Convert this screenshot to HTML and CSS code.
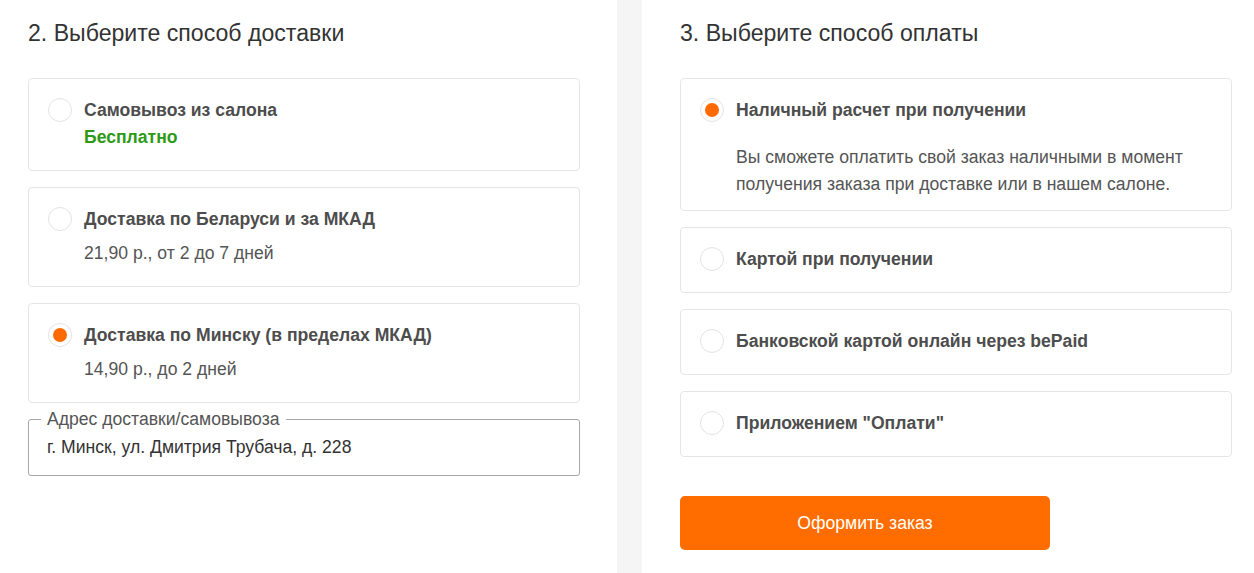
FILE: index.html
```html
<!DOCTYPE html>
<html lang="ru">
<head>
<meta charset="utf-8">
<link rel="stylesheet" href="styles.css">
</head>
<body>
<div class="page">
  <section class="col col-left">
    <h2 class="heading">2. Выберите способ доставки</h2>
    <div class="options">
      <div class="card">
        <span class="radio"></span>
        <div class="body">
          <div class="title">Самовывоз из салона</div>
          <div class="free">Бесплатно</div>
        </div>
      </div>
      <div class="card">
        <span class="radio"></span>
        <div class="body">
          <div class="title">Доставка по Беларуси и за МКАД</div>
          <div class="sub">21,90 р., от 2 до 7 дней</div>
        </div>
      </div>
      <div class="card">
        <span class="radio checked"></span>
        <div class="body">
          <div class="title">Доставка по Минску (в пределах МКАД)</div>
          <div class="sub">14,90 р., до 2 дней</div>
        </div>
      </div>
      <fieldset class="field">
        <legend>Адрес доставки/самовывоза</legend>
        <div class="value">г. Минск, ул. Дмитрия Трубача, д. 228</div>
      </fieldset>
    </div>
  </section>
  <div class="divider"></div>
  <section class="col col-right">
    <h2 class="heading">3. Выберите способ оплаты</h2>
    <div class="options">
      <div class="card card-desc">
        <span class="radio checked"></span>
        <div class="body">
          <div class="title">Наличный расчет при получении</div>
          <div class="desc">Вы сможете оплатить свой заказ наличными в момент получения заказа при доставке или в нашем салоне.</div>
        </div>
      </div>
      <div class="card">
        <span class="radio"></span>
        <div class="body"><div class="title">Картой при получении</div></div>
      </div>
      <div class="card">
        <span class="radio"></span>
        <div class="body"><div class="title">Банковской картой онлайн через bePaid</div></div>
      </div>
      <div class="card">
        <span class="radio"></span>
        <div class="body"><div class="title">Приложением "Оплати"</div></div>
      </div>
    </div>
    <button class="submit" type="button">Оформить заказ</button>
  </section>
</div>
</body>
</html>
```

FILE: styles.css
```css
* { box-sizing: border-box; }
html, body { margin: 0; padding: 0; background: #fff; }
body {
  font-family: "Liberation Sans", Arial, sans-serif;
  color: #555;
  font-size: 17.6px;
}
.page {
  display: flex;
  height: 573px;
  overflow: hidden;
}
.col { padding-top: 20px; }
.col-left { width: 617px; padding-left: 28px; }
.col-right { flex: 1; padding-left: 38px; }
.divider { width: 25px; background: #f5f5f5; }
.heading {
  margin: 0;
  font-size: 23.1px;
  line-height: 26px;
  font-weight: normal;
  color: #333;
}
.options {
  margin-top: 32px;
  width: 552px;
  display: flex;
  flex-direction: column;
  gap: 16px;
}
.card {
  display: flex;
  align-items: flex-start;
  gap: 12px;
  border: 1px solid #e6e6e6;
  border-radius: 4px;
  padding: 19px 19px 21px 19px;
}
.radio {
  flex: none;
  width: 24px;
  height: 24px;
  border: 1px solid #e3e3e3;
  border-radius: 50%;
  display: flex;
  align-items: center;
  justify-content: center;
}
.radio.checked::after {
  content: "";
  width: 14px;
  height: 14px;
  border-radius: 50%;
  background: #ff6a00;
}
.title {
  font-weight: bold;
  line-height: 24px;
  color: #4d4d4d;
}
.free {
  margin-top: 3px;
  font-weight: bold;
  color: #2d9a17;
  line-height: 24px;
}
.sub {
  margin-top: 10px;
  line-height: 24px;
  color: #555;
}
.card-desc { padding-bottom: 12px; }
.desc {
  margin-top: 22px;
  line-height: 27px;
  color: #555;
}
.field {
  margin: -10px 0 0 0;
  border: 1px solid #a8a8a8;
  border-radius: 3px;
  padding: 0 18px;
  min-width: 0;
  height: 67px;
}
.field legend {
  padding: 0 6px;
  margin-left: -6px;
  font-size: 17.6px;
  line-height: 20px;
  color: #555;
}
.value {
  margin-top: 7px;
  line-height: 22px;
  color: #333;
}
.submit {
  display: block;
  margin-top: 39px;
  width: 370px;
  height: 54px;
  border: 0;
  border-radius: 5px;
  background: #ff6d00;
  color: #fff;
  font-family: "Liberation Sans", Arial, sans-serif;
  font-size: 17.6px;
}
```
